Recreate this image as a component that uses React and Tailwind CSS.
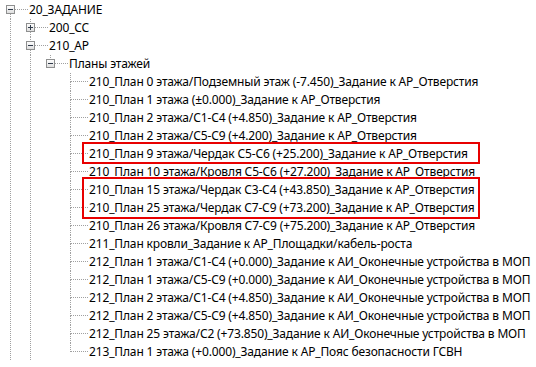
import React from "react";

const DOT = "#a0a0a0";

function Guide({ on }) {
  return (
    <svg width="20" height="18" className="shrink-0 block" shapeRendering="crispEdges">
      {on && <line x1="10.5" y1="0" x2="10.5" y2="18" stroke={DOT} strokeDasharray="1 1" />}
    </svg>
  );
}

function NodeCell({ top, bottom, expander }) {
  return (
    <svg width="28" height="18" className="shrink-0 block" shapeRendering="crispEdges">
      {top && <line x1="10.5" y1="0" x2="10.5" y2={expander ? 4 : 9} stroke={DOT} strokeDasharray="1 1" />}
      {bottom && <line x1="10.5" y1={expander ? 13 : 9} x2="10.5" y2="18" stroke={DOT} strokeDasharray="1 1" />}
      <line x1={expander ? 15 : 11} y1="8.5" x2="28" y2="8.5" stroke={DOT} strokeDasharray="1 1" />
      {expander && (
        <g>
          <defs>
            <linearGradient id="bx" x1="0" y1="0" x2="0" y2="1">
              <stop offset="0" stopColor="#ffffff" />
              <stop offset="1" stopColor="#dcdcdc" />
            </linearGradient>
          </defs>
          <rect x="6.5" y="4.5" width="8" height="8" fill="url(#bx)" stroke="#8e8f8f" />
          <line x1="8" y1="8.5" x2="13" y2="8.5" stroke="#2f3a4a" />
          {expander === "plus" && <line x1="10.5" y1="6" x2="10.5" y2="11" stroke="#2f3a4a" />}
        </g>
      )}
    </svg>
  );
}

const leaves = [
  "210_План 0 этажа/Подземный этаж (-7.450)_Задание к АР_Отверстия",
  "210_План 1 этажа (±0.000)_Задание к АР_Отверстия",
  "210_План 2 этажа/С1-С4 (+4.850)_Задание к АР_Отверстия",
  "210_План 2 этажа/С5-С9 (+4.200)_Задание к АР_Отверстия",
  "210_План 9 этажа/Чердак С5-С6 (+25.200)_Задание к АР_Отверстия",
  "210_План 10 этажа/Кровля С5-С6 (+27.200)_Задание к АР_Отверстия",
  "210_План 15 этажа/Чердак С3-С4 (+43.850)_Задание к АР_Отверстия",
  "210_План 25 этажа/Чердак С7-С9 (+73.200)_Задание к АР_Отверстия",
  "210_План 26 этажа/Кровля С7-С9 (+75.200)_Задание к АР_Отверстия",
  "211_План кровли_Задание к АР_Площадки/кабель-роста",
  "212_План 1 этажа/С1-С4 (+0.000)_Задание к АИ_Оконечные устройства в МОП",
  "212_План 1 этажа/С5-С9 (+0.000)_Задание к АИ_Оконечные устройства в МОП",
  "212_План 2 этажа/С1-С4 (+4.850)_Задание к АИ_Оконечные устройства в МОП",
  "212_План 2 этажа/С5-С9 (+4.850)_Задание к АИ_Оконечные устройства в МОП",
  "212_План 25 этажа/С2 (+73.850)_Задание к АИ_Оконечные устройства в МОП",
  "213_План 1 этажа (+0.000)_Задание к АР_Пояс безопасности ГСВН",
];

const rows = [
  { text: "20_ЗАДАНИЕ", guides: [], top: false, bottom: true, exp: "minus" },
  { text: "200_СС", guides: [true], top: true, bottom: true, exp: "plus" },
  { text: "210_АР", guides: [true], top: true, bottom: true, exp: "minus" },
  { text: "Планы этажей", guides: [true, true], top: true, bottom: false, exp: "minus" },
  ...leaves.map((t, i) => ({
    text: t,
    guides: [true, true, false],
    top: true,
    bottom: i < leaves.length - 1,
    exp: null,
  })),
];

function Row({ r }) {
  return (
    <div className="flex h-[18px] items-center">
      {r.guides.map((g, i) => (
        <Guide key={i} on={g} />
      ))}
      <NodeCell top={r.top} bottom={r.bottom} expander={r.exp} />
      <span className="ml-[1px] whitespace-nowrap text-[12px] leading-[18px] tracking-[-0.15px] text-black">{r.text}</span>
    </div>
  );
}

export default function App() {
  return (
    <div
      className="relative h-[367px] w-[536px] overflow-hidden bg-white pt-[1px]"
      style={{ fontFamily: '"Segoe UI", "Noto Sans", sans-serif' }}
    >
      {rows.map((r, i) => (
        <Row key={i} r={r} />
      ))}
      <div className="absolute left-[82px] top-[142px] h-[22px] w-[398px] border-2 border-[#e80000]" />
      <div className="absolute left-[82px] top-[177px] h-[42px] w-[398px] border-2 border-[#e80000]" />
    </div>
  );
}
